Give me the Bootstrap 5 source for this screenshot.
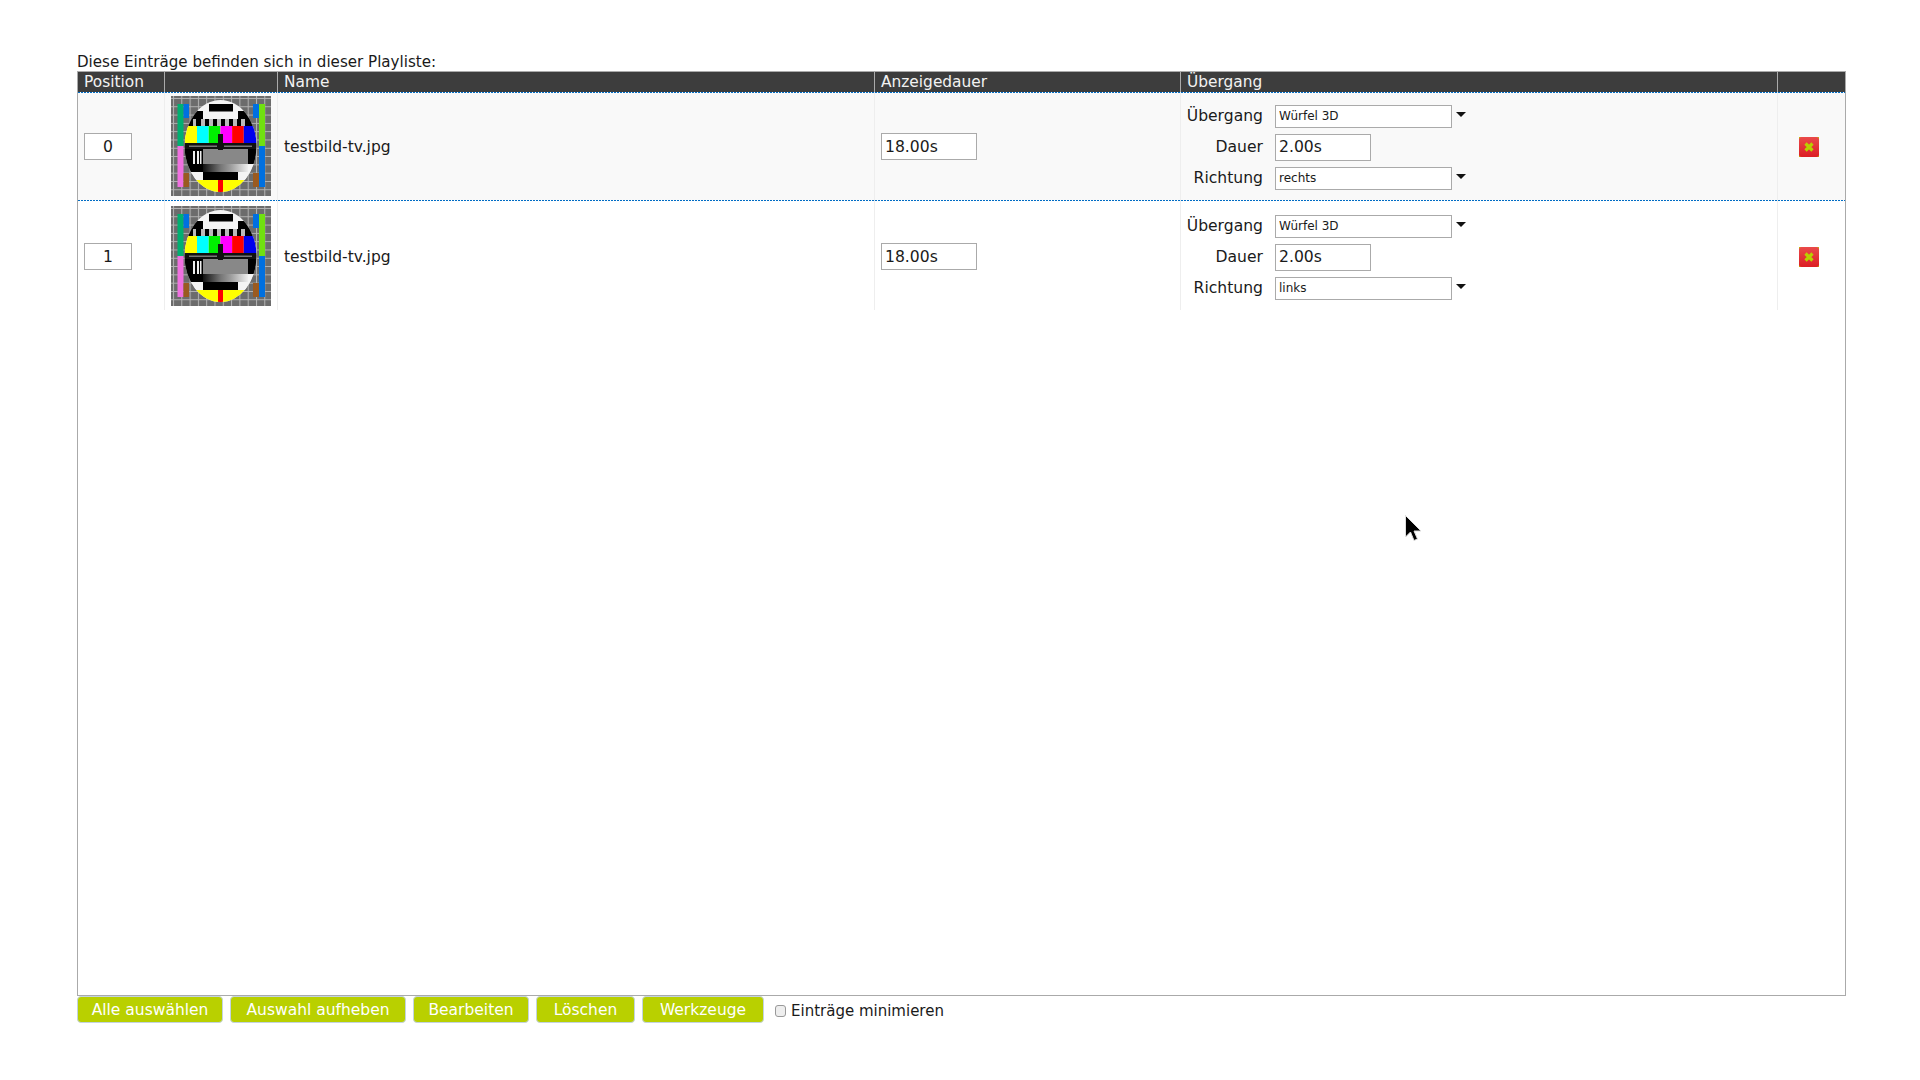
<!DOCTYPE html>
<html lang="de">
<head>
    <meta charset="UTF-8">
    <title>Playliste</title>
    <link href="https://cdn.jsdelivr.net/npm/bootstrap@5.3.0/dist/css/bootstrap.min.css" rel="stylesheet">
    <style>
        body {
            font-family: "DejaVu Sans", sans-serif;
            font-size: 15px;
            color: #1a1a1a;
            background: #fff;
            height: 1080px;
            overflow: hidden;
        }

        .page-wrap {
            padding: 53px 74px 0 77px;
        }

        .intro-text {
            font-size: 15.1px;
            line-height: 18px;
        }

        .list-box {
            height: 925px;
            border: 1px solid #aaa;
        }

        .entry-table {
            width: 100%;
            table-layout: fixed;
            border-collapse: separate;
            border-spacing: 0;
        }

        .entry-table th {
            background: #3d3d3d;
            color: #f2f2f2;
            font-size: 15.4px;
            font-weight: 400;
            height: 20px;
            line-height: 18px;
            padding: 0 0 0 6px;
            border-left: 1px solid #aaa;
        }

        .entry-table th:first-child,
        .entry-table td:first-child {
            border-left: 0;
        }

        .entry-table td {
            height: 110px;
            padding: 3px 0 0 6px;
            border-left: 1px solid #eee;
            background: repeating-linear-gradient(90deg, #006cc4 0 2px, transparent 2px 3px) left top / 100% 1px no-repeat;
            vertical-align: middle;
        }

        .entry-table tr.row-odd td {
            height: 108px;
            padding-top: 1px;
            background-color: #f9f9f9;
        }

        .entry-name span {
            display: block;
            padding-top: 2px;
            font-size: 15.5px;
        }

        .entry-input,
        .entry-input:focus {
            height: 27px;
            padding: 0 3px;
            border: 1px solid #aaa;
            border-radius: 0;
            font-size: 15.6px;
            line-height: 25px;
            color: #1a1a1a;
            box-shadow: none;
        }

        .input-pos { width: 48px; text-align: center; }
        .input-time { width: 96px; }

        .trans-grid {
            display: grid;
            grid-template-columns: 77px auto;
            column-gap: 12px;
            row-gap: 6px;
            align-items: center;
            margin: 1px 0 0 -1px;
        }

        .trans-grid label {
            font-size: 15.6px;
            line-height: 23px;
            text-align: right;
            white-space: nowrap;
        }

        .select-wrap {
            display: flex;
            align-items: center;
        }

        .entry-select,
        .entry-select:focus {
            width: 177px;
            height: 23px;
            padding: 0 3px;
            border: 1px solid #aaa;
            border-radius: 0;
            background-image: none;
            font-size: 12px;
            line-height: 21px;
            color: #1a1a1a;
            box-shadow: none;
        }

        .select-arrow {
            width: 0;
            height: 0;
            margin-left: 4px;
            margin-top: -3px;
            border-left: 5px solid transparent;
            border-right: 5px solid transparent;
            border-top: 5px solid #111;
        }

        .thumb-svg,
        .del-icon {
            display: block;
        }

        .thumb-svg {
            margin-top: -1px;
        }

        .del-icon {
            margin-left: 15px;
        }

        .tool-bar {
            gap: 7px;
        }

        .tool-btn {
            height: 27px;
            padding: 1px 0 0;
            background: #b9d000;
            border: 1px solid #c3d3e0;
            border-radius: 4px;
            color: #fff;
            font-size: 15.5px;
            line-height: 24px;
            white-space: nowrap;
        }

        .tool-btn:nth-child(1) { width: 146px; }
        .tool-btn:nth-child(2) { width: 176px; }
        .tool-btn:nth-child(3) { width: 116px; }
        .tool-btn:nth-child(4) { width: 99px; }
        .tool-btn:nth-child(5) { width: 122px; }

        .min-check {
            margin-left: 4px;
            margin-top: 4px;
        }

        .min-check input {
            appearance: none;
            width: 11px;
            height: 12px;
            margin: -2px 5px 0 0;
            background: #eee;
            border: 1px solid #999;
            border-radius: 3px;
        }

        .mouse-cursor {
            position: absolute;
            left: 1404px;
            top: 514px;
        }
    </style>
</head>
<body>
    <svg width="0" height="0" class="position-absolute">
        <defs>
            <pattern id="testGrid" width="8.3" height="8.3" patternUnits="userSpaceOnUse" x="2" y="2">
                <rect width="8.3" height="8.3" fill="#6c6c6c"/>
                <path d="M0 0H8.3M0 0V8.3" stroke="#b4b4b4" stroke-width="2"/>
            </pattern>
            <linearGradient id="greyRamp">
                <stop offset="0" stop-color="#111"/>
                <stop offset=".4" stop-color="#777"/>
                <stop offset=".6" stop-color="#999"/>
                <stop offset="1" stop-color="#eee"/>
            </linearGradient>
            <linearGradient id="redBtn" x2="0" y2="1">
                <stop offset="0" stop-color="#ea4a4a"/>
                <stop offset="1" stop-color="#dc1e24"/>
            </linearGradient>
            <clipPath id="discClip"><ellipse cx="49.5" cy="50" rx="36" ry="46"/></clipPath>
            <symbol id="testCard" viewBox="0 0 100 100">
                <rect width="100" height="100" fill="url(#testGrid)"/>
                <rect x="6.500" y="8" width="6" height="42" fill="#00b070"/>
                <rect x="6.500" y="50" width="6" height="41" fill="#f070e0"/>
                <rect x="12.500" y="8" width="5.500" height="14" fill="#0070e0"/>
                <rect x="12.500" y="77" width="5.500" height="14" fill="#9a5a20"/>
                <rect x="82" y="8" width="6" height="14" fill="#0070e0"/>
                <rect x="82" y="77" width="6" height="14" fill="#9a5a20"/>
                <rect x="88" y="8" width="6" height="42" fill="#70e010"/>
                <rect x="88" y="50" width="6" height="41" fill="#0070e0"/>
                <g clip-path="url(#discClip)">
                    <rect width="100" height="100" fill="#f4f4f4"/>
                    <rect x="38" y="8" width="24" height="7.500" fill="#000"/>
                    <rect x="10" y="15" width="22" height="8" fill="#000"/>
                    <rect x="67" y="15" width="22" height="8" fill="#000"/>
                    <rect x="10" y="23" width="80" height="7" fill="#000"/>
                    <path d="M22 23h3v7h-3zM30 23h4v7h-4zM38 23h4v7h-4zM46 23h4v7h-4zM54 23h4v7h-4zM62 23h4v7h-4zM70 23h4v7h-4z" fill="#bbb"/>
                    <rect x="14" y="30" width="12" height="17" fill="#ff0"/>
                    <rect x="26" y="30" width="11.700" height="17" fill="#0ff"/>
                    <rect x="37.700" y="30" width="11.700" height="17" fill="#0e0"/>
                    <rect x="49.400" y="30" width="11.700" height="17" fill="#f0f"/>
                    <rect x="61.100" y="30" width="11.700" height="17" fill="#f00"/>
                    <rect x="72.800" y="30" width="13" height="17" fill="#00e"/>
                    <rect x="10" y="47" width="80" height="6" fill="#111"/>
                    <path d="M18 49.500h28v1.500h-28zM53 49.500h28v1.500h-28z" fill="#777"/>
                    <rect x="10" y="53" width="80" height="15" fill="#000"/>
                    <rect x="32" y="53" width="45" height="15" fill="#888"/>
                    <path d="M22 55h2v13h-2zM26 55h2v13h-2zM29 55h1.500v13h-1.500z" fill="#eee"/>
                    <rect x="10" y="68" width="22" height="8" fill="#000"/>
                    <rect x="32" y="68" width="45" height="8" fill="url(#greyRamp)"/>
                    <rect x="77" y="68" width="13" height="8" fill="#f4f4f4"/>
                    <rect x="10" y="76" width="80" height="8" fill="#f4f4f4"/>
                    <rect x="32" y="76" width="35" height="8" fill="#000"/>
                    <rect x="10" y="84" width="80" height="14" fill="#ff0"/>
                    <rect x="47" y="84" width="5" height="14" fill="#f00"/>
                    <rect x="47" y="38" width="5" height="16" fill="#111"/>
                </g>
            </symbol>
            <symbol id="delIcon" viewBox="0 0 20 20">
                <rect width="20" height="20" fill="#b9d000"/>
                <rect width="20" height="20" rx="2.500" fill="url(#redBtn)"/>
                <path d="M6.500 6.500L13.500 13.500M13.500 6.500L6.500 13.500" stroke="#b9d000" stroke-width="3.200"/>
            </symbol>
        </defs>
    </svg>

    <div class="page-wrap">
        <div class="intro-text">Diese Einträge befinden sich in dieser Playliste:</div>
        <div class="list-box">
            <table class="entry-table">
                <colgroup>
                    <col style="width: 86px">
                    <col style="width: 113px">
                    <col style="width: 597px">
                    <col style="width: 306px">
                    <col style="width: 597px">
                    <col>
                </colgroup>
                <thead>
                    <tr>
                        <th>Position</th>
                        <th></th>
                        <th>Name</th>
                        <th>Anzeigedauer</th>
                        <th>Übergang</th>
                        <th></th>
                    </tr>
                </thead>
                <tbody id="entryRows"></tbody>
            </table>
        </div>
        <div class="tool-bar d-flex align-items-center">
            <button type="button" class="btn tool-btn">Alle auswählen</button>
            <button type="button" class="btn tool-btn">Auswahl aufheben</button>
            <button type="button" class="btn tool-btn">Bearbeiten</button>
            <button type="button" class="btn tool-btn">Löschen</button>
            <button type="button" class="btn tool-btn">Werkzeuge</button>
            <label class="min-check d-flex align-items-center"><input type="checkbox">Einträge minimieren</label>
        </div>
    </div>

    <svg class="mouse-cursor" width="20" height="30" viewBox="0 0 20 30">
        <path d="M1.500 1.500V23L6.500 18L10 26.500L13.500 25L10 17H17Z" fill="#000" stroke="#ddd" stroke-width="1"/>
    </svg>

    <script>
        // Playlist entries
        const entries = [
            { pos: 0, name: 'testbild-tv.jpg', time: '18.00s', dauer: '2.00s', richtung: 'rechts' },
            { pos: 1, name: 'testbild-tv.jpg', time: '18.00s', dauer: '2.00s', richtung: 'links' }
        ];

        const rows = document.getElementById('entryRows');
        entries.forEach((entry, i) => {
            const tr = document.createElement('tr');
            if (i % 2 === 0) tr.className = 'row-odd';
            tr.innerHTML = `
                <td><input class="form-control entry-input input-pos" value="${entry.pos}"></td>
                <td><svg class="thumb-svg" width="100" height="100"><use href="#testCard"/></svg></td>
                <td class="entry-name"><span>${entry.name}</span></td>
                <td><input class="form-control entry-input input-time" value="${entry.time}"></td>
                <td>
                    <div class="trans-grid">
                        <label>Übergang</label>
                        <div class="select-wrap">
                            <select class="form-select entry-select"><option>Würfel 3D</option></select>
                            <span class="select-arrow"></span>
                        </div>
                        <label>Dauer</label>
                        <div><input class="form-control entry-input input-time" value="${entry.dauer}"></div>
                        <label>Richtung</label>
                        <div class="select-wrap">
                            <select class="form-select entry-select"><option>${entry.richtung}</option></select>
                            <span class="select-arrow"></span>
                        </div>
                    </div>
                </td>
                <td><svg class="del-icon" width="20" height="20"><use href="#delIcon"/></svg></td>
            `;
            rows.appendChild(tr);
        });
    </script>
</body>
</html>
